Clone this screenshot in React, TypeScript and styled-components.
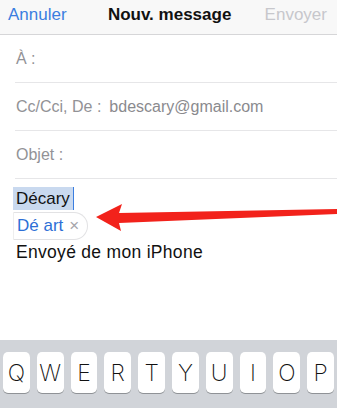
import { styled, createGlobalStyle } from 'styled-components';

const GlobalStyle = createGlobalStyle`
  html, body {
    margin: 0;
    padding: 0;
    background: #ffffff;
  }
  * {
    box-sizing: border-box;
  }
`;

const KEYS = ['Q', 'W', 'E', 'R', 'T', 'Y', 'U', 'I', 'O', 'P'];

export default function App() {
  return (
    <>
      <GlobalStyle />
      <Screen>
        <NavBar>
          <NavButton>Annuler</NavButton>
          <NavTitle>Nouv. message</NavTitle>
          <NavButton $disabled>Envoyer</NavButton>
        </NavBar>
        <FieldRow>
          <FieldLabel>À :</FieldLabel>
        </FieldRow>
        <FieldRow>
          <FieldLabel>Cc/Cci, De :</FieldLabel>
          <FieldValue>bdescary@gmail.com</FieldValue>
        </FieldRow>
        <FieldRow>
          <FieldLabel>Objet :</FieldLabel>
        </FieldRow>
        <Body>
          <Selected>Décary</Selected>
          <Suggestion>
            Dé art <Dismiss>×</Dismiss>
          </Suggestion>
          <Signature>Envoyé de mon iPhone</Signature>
          <Arrow viewBox="0 0 337 408" preserveAspectRatio="none">
            <polygon
              points="96,218 122,205 119,214 337,210 337,215 119,224 121,232"
              fill="#f2221b"
            />
          </Arrow>
        </Body>
        <Keyboard>
          {KEYS.map((k) => (
            <Key key={k}>{k}</Key>
          ))}
        </Keyboard>
      </Screen>
    </>
  );
}

const Screen = styled.div`
  position: relative;
  width: 337px;
  height: 408px;
  display: flex;
  flex-direction: column;
  overflow: hidden;
  font-family: 'Liberation Sans', Arial, sans-serif;
  background: #ffffff;
`;

const NavBar = styled.div`
  height: 35px;
  flex-shrink: 0;
  display: flex;
  align-items: center;
  justify-content: space-between;
  padding: 0 10px 4px 8px;
  background: #f8f8f8;
  border-bottom: 1px solid #d6d6d8;
`;

const NavButton = styled.div<{ $disabled?: boolean }>`
  font-size: 17px;
  color: ${({ $disabled }) => ($disabled ? '#c7c7cc' : '#3b7ee0')};
`;

const NavTitle = styled.div`
  font-size: 17px;
  font-weight: 600;
  color: #111111;
  margin-left: 8px;
`;

const FieldRow = styled.div`
  height: 48px;
  flex-shrink: 0;
  margin-left: 15px;
  padding-left: 1px;
  display: flex;
  align-items: center;
  gap: 8px;
  border-bottom: 1px solid #e6e6e8;
  font-size: 16px;
  color: #929296;
`;

const FieldLabel = styled.span``;

const FieldValue = styled.span`
  color: #8a8a8e;
`;

const Body = styled.div`
  position: relative;
  flex: 1;
  padding: 8px 0 0 13px;
  display: flex;
  flex-direction: column;
  align-items: flex-start;
`;

const Selected = styled.span`
  font-size: 17px;
  line-height: 23px;
  padding: 0 3px;
  background: #c9d9ef;
  color: #111111;
  border-right: 1px solid #3b7ee0;
`;

const Suggestion = styled.div`
  margin-top: 2px;
  height: 28px;
  display: flex;
  align-items: center;
  gap: 6px;
  padding: 0 8px 0 3px;
  border: 1px solid #e2e2e4;
  border-left-color: #eeeeee;
  border-radius: 0 14px 14px 0;
  font-size: 17px;
  color: #2d6fd6;
  background: #ffffff;
`;

const Dismiss = styled.span`
  font-size: 17px;
  color: #a5a5aa;
`;

const Signature = styled.div`
  margin-top: 1px;
  padding-left: 3px;
  font-size: 17.5px;
  letter-spacing: 0.3px;
  line-height: 22px;
  color: #111111;
`;

const Arrow = styled.svg`
  position: absolute;
  left: 0;
  top: -180px;
  width: 337px;
  height: 408px;
  pointer-events: none;
`;

const Keyboard = styled.div`
  height: 68px;
  flex-shrink: 0;
  background: #d1d4d9;
  display: grid;
  grid-template-columns: repeat(10, 1fr);
  column-gap: 7px;
  padding: 12px 3px 15px 3px;
`;

const Key = styled.div`
  background: #ffffff;
  border-radius: 5px;
  box-shadow: 0 1px 0 #8f9296;
  display: flex;
  align-items: center;
  justify-content: center;
  font-family: Inter, 'Open Sans', sans-serif;
  font-size: 23px;
  font-weight: 200;
  color: #111111;
`;
